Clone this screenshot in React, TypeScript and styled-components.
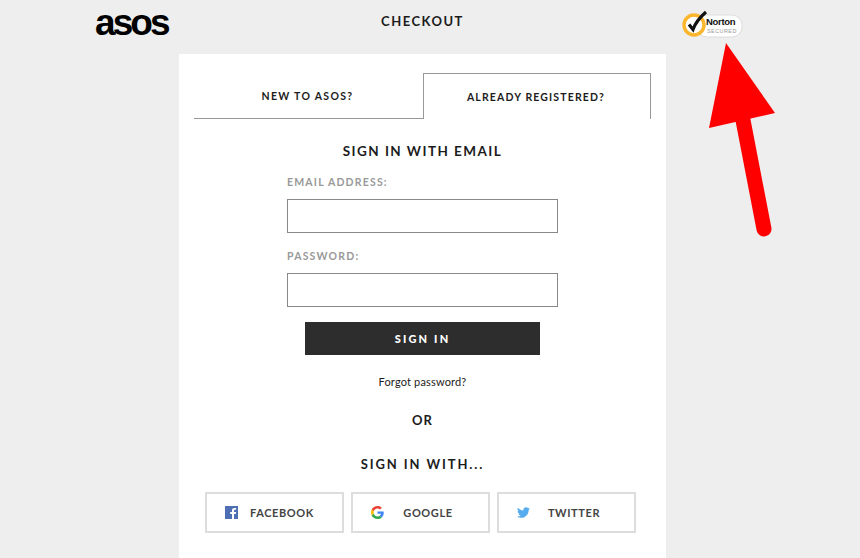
import * as React from "react";
import styled, { createGlobalStyle } from "styled-components";
import { FaTwitter } from "react-icons/fa";

const GlobalStyle = createGlobalStyle`
  html, body {
    margin: 0;
    padding: 0;
    background: #eeeeee;
    overflow: hidden;
  }
  * { box-sizing: border-box; }
`;

const Page = styled.div`
  position: relative;
  width: 860px;
  height: 558px;
  overflow: hidden;
  background: #eeeeee;
  font-family: Lato, "Liberation Sans", sans-serif;
  color: #1c1c1c;
`;

const Header = styled.header`
  display: grid;
  grid-template-columns: 179px 487px 1fr;
  height: 54px;
`;

const Logo = styled.div`
  padding: 0 0 0 95px;
  font-family: "Liberation Sans", Arial, sans-serif;
  font-size: 37px;
  font-weight: 700;
  letter-spacing: -2.9px;
  line-height: 46px;
  color: #000;
`;

const HeaderTitle = styled.div`
  padding-top: 12px;
  text-align: center;
  font-size: 13px;
  font-weight: 700;
  letter-spacing: 1.5px;
  line-height: 18px;
`;

const NortonWrap = styled.div`
  padding: 10px 0 0 15px;
`;

const Card = styled.main`
  width: 487px;
  height: 504px;
  margin-left: 179px;
  padding: 19px 15px 0;
  background: #fff;
  display: flex;
  flex-direction: column;
  align-items: center;
`;

const Tabs = styled.div`
  display: grid;
  grid-template-columns: 230px 227px;
  width: 457px;
  height: 46px;
`;

const Tab = styled.div<{ $active?: boolean }>`
  display: flex;
  align-items: center;
  justify-content: center;
  font-size: 10.5px;
  font-weight: 700;
  letter-spacing: ${(p) => (p.$active ? "1.15px" : "1.3px")};
  color: #1c1c1c;
  border-style: solid;
  border-color: #999;
  border-width: ${(p) => (p.$active ? "1px 1px 0 0" : "0 1px 1px 0")};
  padding: ${(p) => (p.$active ? "1px 2px 0 0" : "0 2px 0 0")};
`;

const FormTitle = styled.h2`
  margin: 23px 0 0;
  font-size: 13.5px;
  font-weight: 700;
  letter-spacing: 1.45px;
  line-height: 18px;
`;

const Form = styled.form`
  width: 271px;
  margin-top: 7px;
  display: flex;
  flex-direction: column;
`;

const Label = styled.label`
  display: block;
  margin-top: 8px;
  font-size: 10.5px;
  font-weight: 700;
  letter-spacing: 1.2px;
  line-height: 14px;
  color: #999;
`;

const Input = styled.input`
  display: block;
  width: 271px;
  height: 34px;
  margin: 10px 0 8px;
  border: 1px solid #888;
  background: #fff;
  outline: none;
`;

const SubmitButton = styled.button`
  align-self: center;
  width: 235px;
  height: 33px;
  margin-top: 7px;
  border: 0;
  background: #2d2d2d;
  color: #fff;
  font-family: inherit;
  font-size: 11px;
  font-weight: 900;
  letter-spacing: 2.2px;
`;

const Forgot = styled.a`
  margin-top: 20px;
  font-size: 11px;
  line-height: 14px;
  letter-spacing: 0.17px;
  color: #1c1c1c;
`;

const Or = styled.div`
  margin-top: 23px;
  font-size: 13px;
  font-weight: 700;
  letter-spacing: 1px;
  line-height: 16px;
`;

const SocialTitle = styled.h3`
  margin: 28px 0 0;
  font-size: 13px;
  font-weight: 700;
  letter-spacing: 1.9px;
  line-height: 16px;
`;

const SocialRow = styled.div`
  display: flex;
  gap: 7px;
  margin: 20px 4px 0 0;
`;

const SocialButton = styled.button`
  display: grid;
  grid-template-columns: 13px 88px;
  align-items: center;
  width: 139px;
  height: 41px;
  padding: 0 0 0 18px;
  border: 2px solid #dddddd;
  background: #fff;
  color: #444;
  font-family: inherit;
  font-size: 11px;
  font-weight: 700;
  letter-spacing: 0.6px;
  text-align: center;
`;

const Arrow = styled.svg`
  position: absolute;
  left: 700px;
  top: 35px;
`;

function NortonBadge() {
  return (
    <svg width="64" height="30" viewBox="0 0 64 30">
      <rect x="16" y="5" width="45" height="22" rx="10" fill="#fff" stroke="#dcdcdc" />
      <circle cx="13" cy="15" r="10" fill="#fff" stroke="#fbb62b" strokeWidth="3.4" />
      <path d="M8 14.500l4 5C14 14 18 8 25 2" fill="none" stroke="#111" strokeWidth="3.2" />
      <text x="25" y="15" fontFamily="Liberation Sans, sans-serif" fontSize="9.500" fontWeight="700" letterSpacing="-0.3" fill="#111">
        Norton
      </text>
      <text x="26" y="23" fontFamily="Liberation Sans, sans-serif" fontSize="5.400" letterSpacing="0.5" fill="#999">
        SECURED
      </text>
    </svg>
  );
}

function FacebookIcon() {
  return (
    <svg width="13" height="13" viewBox="0 0 13 13">
      <rect width="13" height="13" fill="#4f6fb5" />
      <path d="M9 13V8h1.800l.3-2H9V4.800c0-.6.2-1 1-1h1.100V2c-.3 0-.9-.1-1.600-.1C8 1.900 7 2.800 7 4.500V6H5.200v2H7v5z" fill="#fff" />
    </svg>
  );
}

function GoogleIcon() {
  return (
    <svg width="13" height="13" viewBox="0 0 48 48">
      <path fill="#EA4335" d="M24 9.500c3.500 0 6.700 1.200 9.200 3.600l6.900-6.900C35.900 2.400 30.500 0 24 0 14.600 0 6.500 5.400 2.600 13.200l8 6.200C12.400 13.700 17.700 9.500 24 9.500z" />
      <path fill="#4285F4" d="M47 24.500c0-1.600-.1-3.100-.4-4.500H24v9h12.900c-.6 3-2.200 5.500-4.800 7.200l7.700 6C44.300 37.900 47 31.800 47 24.500z" />
      <path fill="#FBBC05" d="M10.500 28.600c-.5-1.400-.8-3-.8-4.600s.3-3.200.8-4.600l-8-6.200C.9 16.500 0 20.100 0 24s.9 7.500 2.600 10.800l7.900-6.200z" />
      <path fill="#34A853" d="M24 48c6.500 0 11.900-2.100 15.900-5.800l-7.700-6c-2.200 1.400-4.900 2.300-8.200 2.300-6.300 0-11.600-4.200-13.500-9.900l-8 6.200C6.500 42.600 14.600 48 24 48z" />
    </svg>
  );
}

export default function App() {
  return (
    <>
      <GlobalStyle />
      <Page>
        <Header>
          <Logo>asos</Logo>
          <HeaderTitle>CHECKOUT</HeaderTitle>
          <NortonWrap>
            <NortonBadge />
          </NortonWrap>
        </Header>
        <Card>
          <Tabs>
            <Tab>NEW TO ASOS?</Tab>
            <Tab $active>ALREADY REGISTERED?</Tab>
          </Tabs>
          <FormTitle>SIGN IN WITH EMAIL</FormTitle>
          <Form>
            <Label>EMAIL ADDRESS:</Label>
            <Input type="text" />
            <Label>PASSWORD:</Label>
            <Input type="password" />
            <SubmitButton type="button">SIGN IN</SubmitButton>
          </Form>
          <Forgot>Forgot password?</Forgot>
          <Or>OR</Or>
          <SocialTitle>SIGN IN WITH...</SocialTitle>
          <SocialRow>
            <SocialButton type="button">
              <FacebookIcon />
              <span>FACEBOOK</span>
            </SocialButton>
            <SocialButton type="button">
              <GoogleIcon />
              <span>GOOGLE</span>
            </SocialButton>
            <SocialButton type="button">
              <FaTwitter size={13} color="#55acee" />
              <span>TWITTER</span>
            </SocialButton>
          </SocialRow>
        </Card>
        <Arrow width="85" height="205" viewBox="700 35 85 205">
          <line x1="742" y1="115" x2="764" y2="229" stroke="#ff0000" strokeWidth="15" strokeLinecap="round" />
          <polygon points="726,43 775,113 709,128" fill="#ff0000" />
        </Arrow>
      </Page>
    </>
  );
}
